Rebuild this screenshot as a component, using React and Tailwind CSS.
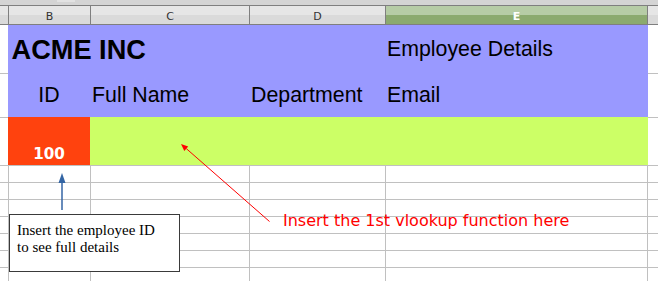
import React from "react";

const rows = [0, 1, 2, 3, 4, 5, 6];

function HeaderCell({ className, children }) {
  return (
    <div
      className={
        "flex items-center justify-center pt-[2px] leading-none border-r border-[#7f7f7f] " +
        className
      }
    >
      {children}
    </div>
  );
}

export default function App() {
  return (
    <div className="relative w-[658px] h-[281px] overflow-hidden bg-white font-['Liberation_Sans',Arial,sans-serif] text-black">
      {/* top strip */}
      <div className="flex h-[5px] bg-[#d4d4d4]">
        <div className="ml-[57px] w-[18px] h-[2px] bg-[#e2e2e2]" />
      </div>

      {/* column header */}
      <div className="flex h-[20px] border-y border-[#7f7f7f] font-['DejaVu_Sans',sans-serif] text-[11px] text-[#333]">
        <div className="w-[9px] border-r border-[#7f7f7f] bg-[linear-gradient(to_bottom,#e6e6e6_50%,#dadada_50%)]" />
        <HeaderCell className="w-[82px] bg-[linear-gradient(to_bottom,#e6e6e6_50%,#dadada_50%)]">B</HeaderCell>
        <HeaderCell className="w-[159px] bg-[linear-gradient(to_bottom,#e6e6e6_50%,#dadada_50%)]">C</HeaderCell>
        <HeaderCell className="w-[136px] bg-[linear-gradient(to_bottom,#e6e6e6_50%,#dadada_50%)]">D</HeaderCell>
        <HeaderCell className="w-[262px] text-white font-bold bg-[linear-gradient(to_bottom,#b6cca6_50%,#8baa6f_50%)]">E</HeaderCell>
        <div className="flex-1 bg-[linear-gradient(to_bottom,#e6e6e6_50%,#dadada_50%)]" />
      </div>

      {/* filled rows */}
      <div className="flex">
        <div className="w-[8px] flex flex-col">
          <div className="h-[49px] border-b border-[#c0c0c0]" />
          <div className="h-[44px] border-b border-[#c0c0c0]" />
          <div className="h-[47px]" />
        </div>
        <div className="w-[640px] flex flex-col">
          <div className="h-[92px] bg-[#9999ff] flex flex-col">
            <div className="h-[48px] flex items-center pt-[2px]">
              <div className="w-[377px] pl-[3.5px] text-[27.2px] font-bold leading-none">ACME INC</div>
              <div className="flex-1 pl-[2px] text-[21.33px] leading-none">Employee Details</div>
            </div>
            <div className="h-[44px] flex items-center pt-[2px] text-[21.33px] leading-none">
              <div className="w-[82px] text-center">ID</div>
              <div className="w-[159px] pl-[2px]">Full Name</div>
              <div className="w-[136px] pl-[2px]">Department</div>
              <div className="flex-1 pl-[2px]">Email</div>
            </div>
          </div>
          <div className="h-[48px] flex">
            <div className="w-[82px] bg-[#ff420e] flex items-end justify-center pb-[3px] text-white font-bold font-['DejaVu_Sans',sans-serif] text-[15.2px] leading-none">
              100
            </div>
            <div className="flex-1 bg-[#ccff66]" />
          </div>
        </div>
        <div className="flex-1 flex flex-col">
          <div className="h-[49px] border-b border-[#c0c0c0]" />
          <div className="h-[44px] border-b border-[#c0c0c0]" />
          <div className="h-[47px]" />
        </div>
      </div>

      {/* empty rows */}
      <div className="flex flex-col border-t border-[#c0c0c0]">
        {rows.map((r) => (
          <div key={r} className="flex h-[17px] border-b border-[#c0c0c0]">
            <div className="w-[9px] border-r border-[#c0c0c0]" />
            <div className="w-[82px] border-r border-[#c0c0c0]" />
            <div className="w-[159px] border-r border-[#c0c0c0]" />
            <div className="w-[136px] border-r border-[#c0c0c0]" />
            <div className="w-[262px] border-r border-[#c0c0c0]" />
            <div className="flex-1" />
          </div>
        ))}
      </div>

      {/* drawing objects */}
      <svg className="absolute inset-0 pointer-events-none" width="658" height="281" viewBox="0 0 658 281">
        <line x1="62" y1="210" x2="62" y2="182" stroke="#3465a4" strokeWidth="1.5" />
        <polygon points="62,173 58.5,183 65.5,183" fill="#3465a4" />
        <line x1="269.5" y1="221.5" x2="186.3" y2="148.6" stroke="#ff0000" strokeWidth="1" />
        <polygon points="181,144 188.2,146.4 184.3,150.9" fill="#ff0000" />
      </svg>

      <div className="absolute left-[283px] top-[212.5px] whitespace-nowrap font-['DejaVu_Sans',sans-serif] text-[16px] leading-none text-[#ff0000]">
        Insert the 1st vlookup function here
      </div>

      <div className="absolute left-[9px] top-[214px] w-[171px] h-[58px] bg-white border border-[#3a3a3a] pl-[7px] pt-[6.5px] font-['Liberation_Serif',serif] text-[15px] leading-[17.3px]">
        <div>Insert the employee ID</div>
        <div>to see full details</div>
      </div>
    </div>
  );
}
